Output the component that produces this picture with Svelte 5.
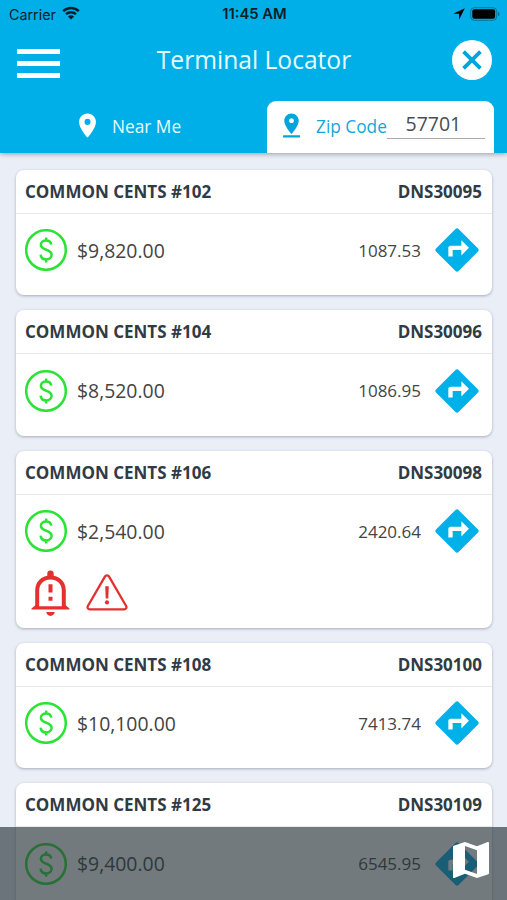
<script lang="ts">
  type Terminal = {
    name: string;
    code: string;
    cash: string;
    distance: string;
    alerts?: boolean;
  };

  const terminals: Terminal[] = [
    { name: "COMMON CENTS #102", code: "DNS30095", cash: "$9,820.00", distance: "1087.53" },
    { name: "COMMON CENTS #104", code: "DNS30096", cash: "$8,520.00", distance: "1086.95" },
    { name: "COMMON CENTS #106", code: "DNS30098", cash: "$2,540.00", distance: "2420.64", alerts: true },
    { name: "COMMON CENTS #108", code: "DNS30100", cash: "$10,100.00", distance: "7413.74" },
    { name: "COMMON CENTS #125", code: "DNS30109", cash: "$9,400.00", distance: "6545.95" }
  ];

  let zip = $state("57701");
</script>

<div class="screen">
  <header>
    <div class="status">
      <span class="carrier">
        Carrier
        <svg class="wifi" viewBox="0 0 18 14">
          <path d="M1.2 5.2a11.2 11.2 0 0 1 15.6 0" />
          <path d="M4 8.2a7.2 7.2 0 0 1 10 0" />
          <path class="solid" d="M9 13.6L5.9 10.5a4.4 4.4 0 0 1 6.2 0z" />
        </svg>
      </span>
      <span class="time">11:45 AM</span>
      <span class="power">
        <svg class="arrow" viewBox="0 0 12 12"><path d="M11.8.2L.2 5.8h5.9v6z" /></svg>
        <svg class="battery" viewBox="0 0 30 14">
          <rect class="shell" x=".7" y=".7" width="26" height="12.6" rx="3.6" />
          <rect x="2.3" y="2.3" width="22.8" height="9.4" rx="2" />
          <path class="nub" d="M28 4.8c2 .8 2 3.6 0 4.4z" />
        </svg>
      </span>
    </div>

    <div class="bar">
      <button class="menu" aria-label="Menu"><i></i><i></i><i></i></button>
      <h1>Terminal Locator</h1>
      <button class="close" aria-label="Close">
        <svg viewBox="0 0 20 20"><path d="M1.6 1.6l16.8 16.8M18.4 1.6L1.6 18.4" /></svg>
      </button>
    </div>

    <nav>
      <div class="tab">
        <svg viewBox="0 0 24 24">
          <path d="M12 2C8.13 2 5 5.13 5 9c0 5.25 7 13 7 13s7-7.75 7-13c0-3.87-3.13-7-7-7zm0 9.5a2.5 2.5 0 0 1 0-5 2.5 2.5 0 0 1 0 5z" />
        </svg>
        <span>Near Me</span>
      </div>
      <div class="tab active">
        <svg viewBox="0 0 24 24">
          <path d="M18 8c0-3.31-2.69-6-6-6S6 4.69 6 8c0 4.5 6 11 6 11s6-6.5 6-11zm-8 0c0-1.1.9-2 2-2s2 .9 2 2-.89 2-2 2c-1.1 0-2-.9-2-2zM5 20v2h14v-2H5z" />
        </svg>
        <span>Zip Code</span>
        <input bind:value={zip} aria-label="Zip Code" />
      </div>
    </nav>
  </header>

  <main>
    {#each terminals as t (t.code)}
      <article>
        <div class="head">
          <span>{t.name}</span>
          <span>{t.code}</span>
        </div>
        <div class="row">
          <svg class="dollar" viewBox="0 0 42 42">
            <circle cx="21" cy="21" r="19.8" />
            <path d="M26.2 15.6c-.3-2.6-2.3-4.1-5.1-4.1-3 0-5.2 1.6-5.2 4.3 0 6.2 10.7 3.8 10.7 10 0 2.8-2.3 4.6-5.4 4.6s-5.4-1.8-5.5-4.8M21.2 8.4v3.2M21.2 30.2v3.3" />
          </svg>
          <span class="cash">{t.cash}</span>
          <span class="distance">{t.distance}</span>
          <svg class="directions" viewBox="0 0 24 24">
            <path d="M21.71 11.29l-9-9c-.39-.39-1.02-.39-1.41 0l-9 9c-.39.39-.39 1.02 0 1.41l9 9c.39.39 1.02.39 1.41 0l9-9c.39-.38.39-1.01 0-1.41zM14 14.5V12h-4v3H8v-4c0-.55.45-1 1-1h5V7.5l3.5 3.5-3.5 3.5z" />
          </svg>
        </div>
        {#if t.alerts}
          <div class="alerts">
            <svg class="bell" viewBox="0 0 40 46">
              <path class="line" d="M6.2 37V20.5C6.2 12.5 12 7.4 19.5 7.4s13.3 5.1 13.3 13.1V37" />
              <path d="M16.3 7V3.6a3.2 3.2 0 0 1 6.4 0V7zM.5 39.6v-1.2L5 34.8v1.5h29v-1.5l4.5 3.6v1.2zM15.2 42h8.6c-.5 2.3-2 3.9-4.3 3.9s-3.8-1.6-4.3-3.9zM17.5 14.2h4v8.4h-4zM17.5 26.8h4v4h-4z" />
            </svg>
            <svg class="warning" viewBox="0 0 42 37">
              <path class="line" d="M18.9 2.6a2.4 2.4 0 0 1 4.2 0L40.1 32c.9 1.6 0 3.3-1.9 3.3H3.8c-1.9 0-2.8-1.7-1.9-3.3z" />
              <path d="M19.2 12.2h3.6l-.5 12.4h-2.6z" />
              <circle cx="21" cy="28.4" r="2.1" />
            </svg>
          </div>
        {/if}
      </article>
    {/each}
  </main>

  <footer>
    <svg viewBox="0 0 24 24">
      <path d="M20.5 3l-.16.03L15 5.1 9 3 3.36 4.9c-.21.07-.36.25-.36.48V20.5c0 .28.22.5.5.5l.16-.03L9 18.9l6 2.1 5.64-1.9c.21-.07.36-.25.36-.48V3.5c0-.28-.22-.5-.5-.5zM15 19l-6-2.11V5l6 2.11V19z" />
    </svg>
  </footer>
</div>

<style>
  :global(body) {
    margin: 0;
    overflow: hidden;
  }

  .screen {
    position: relative;
    height: 900px;
    overflow: hidden;
    background: #e9eef7;
    font-family: "Noto Sans", "Open Sans", sans-serif;
    color: #444;
  }

  .screen * {
    box-sizing: border-box;
  }

  svg {
    display: block;
    flex: none;
  }

  button {
    border: 0;
    padding: 0;
    background: none;
  }

  header {
    height: 152.5px;
    background: #00afe8;
    box-shadow: 0 1px 5px rgba(0, 0, 0, 0.35);
    display: flex;
    flex-direction: column;
  }

  .status {
    height: 28px;
    padding: 0 7px 0 9px;
    display: grid;
    grid-template-columns: 1fr auto 1fr;
    align-items: center;
    font-family: Inter, sans-serif;
    font-size: 14.3px;
    color: #0b1d26;
  }

  .carrier {
    display: flex;
    align-items: center;
    gap: 6px;
  }

  .wifi {
    width: 18px;
    height: 14px;
    margin-top: -2px;
    fill: none;
    stroke: #0b1d26;
    stroke-width: 2.5;
  }

  .wifi .solid {
    fill: #0b1d26;
    stroke: none;
  }

  .time {
    font-size: 14.8px;
    font-weight: 600;
  }

  .power {
    display: flex;
    align-items: center;
    justify-content: flex-end;
    gap: 5px;
    margin-top: -1px;
  }

  .arrow {
    width: 12px;
    height: 12px;
  }

  .battery {
    width: 30px;
    height: 14px;
  }

  .battery .shell {
    fill: none;
    stroke: #0b1d26;
    stroke-opacity: 0.4;
  }

  .battery .nub {
    fill-opacity: 0.4;
  }

  .bar {
    height: 73px;
    padding: 0 15px 0 17px;
    display: flex;
    align-items: center;
    justify-content: space-between;
  }

  .menu {
    width: 43px;
    display: flex;
    flex-direction: column;
    gap: 6.6px;
    margin-bottom: 2px;
  }

  .menu i {
    height: 5.3px;
    background: #fff;
  }

  h1 {
    margin: 0 4px 9px 0;
    font-family: "Open Sans", "Noto Sans", sans-serif;
    font-size: 24.6px;
    line-height: 32px;
    font-weight: 400;
    color: #e8fbff;
  }

  .close {
    width: 40px;
    height: 40px;
    margin-bottom: 9px;
    border-radius: 50%;
    background: #fff;
    display: grid;
    place-items: center;
  }

  .close svg {
    width: 20px;
    height: 20px;
    stroke: #00a5dc;
    stroke-width: 3.8;
  }

  nav {
    flex: 1;
    display: flex;
    padding-right: 13px;
  }

  .tab {
    display: flex;
    align-items: center;
    width: 267px;
    padding-left: 73px;
    font-family: "Open Sans", "Noto Sans", sans-serif;
    font-size: 17.3px;
    color: #e8fbff;
  }

  .tab svg {
    width: 29px;
    height: 29px;
    margin-bottom: 2px;
    fill: #fff;
  }

  .tab span {
    margin-left: 10px;
    white-space: nowrap;
  }

  .tab.active {
    width: 227px;
    padding: 0 10px 0 10px;
    border-radius: 9px 9px 0 0;
    background: #fff;
    color: #14a6da;
  }

  .tab.active svg {
    fill: #00a5dc;
  }

  input {
    width: 98px;
    height: 31px;
    margin: 0 0 7px auto;
    padding: 2px 5px 0 0;
    border: 0;
    border-bottom: 1.5px solid #aaa;
    outline: none;
    background: none;
    font: 19.5px "Open Sans", "Noto Sans", sans-serif;
    text-align: center;
    color: #4a4d52;
  }

  main {
    padding: 17px 15px 0 16px;
    display: flex;
    flex-direction: column;
    gap: 15px;
  }

  article {
    min-height: 125.5px;
    border-radius: 8px;
    background: #fff;
    box-shadow: 0 1px 3px rgba(40, 50, 70, 0.35);
  }

  .head {
    height: 44px;
    padding: 0 10px 0 9px;
    display: flex;
    align-items: center;
    justify-content: space-between;
    border-bottom: 1px solid #e6e8ea;
    font-family: "Open Sans", "Noto Sans", sans-serif;
    font-size: 17px;
    font-weight: 700;
    color: #303b44;
  }

  .row {
    height: 73px;
    padding: 0 9px;
    display: flex;
    align-items: center;
    font-family: "Open Sans", "Noto Sans", sans-serif;
  }

  .dollar {
    width: 42px;
    height: 42px;
    fill: none;
    stroke: #2be336;
    stroke-width: 2.5;
  }

  .cash {
    margin-left: 10px;
    font-size: 19.4px;
  }

  .distance {
    margin-left: auto;
    font-size: 17px;
  }

  .directions {
    width: 52px;
    height: 52px;
    margin-left: 10px;
    fill: #00b0e8;
  }

  .alerts {
    height: 60px;
    padding: 0 0 0 15px;
    display: flex;
    gap: 15px;
    align-items: flex-start;
    fill: #e53030;
  }

  .alerts .line {
    fill: none;
    stroke: #e53030;
  }

  .bell {
    width: 40px;
    height: 46px;
    margin-top: 2px;
  }

  .bell .line {
    stroke-width: 4;
  }

  .warning {
    width: 42px;
    height: 37px;
    margin-top: 6px;
  }

  .warning .line {
    stroke-width: 2.3;
  }

  footer {
    position: absolute;
    left: 0;
    right: 0;
    bottom: 0;
    height: 73.5px;
    padding: 9px 12px 0 0;
    display: flex;
    justify-content: flex-end;
    background: rgba(38, 50, 56, 0.65);
  }

  footer svg {
    width: 48px;
    height: 48px;
    fill: #fff;
  }
</style>
